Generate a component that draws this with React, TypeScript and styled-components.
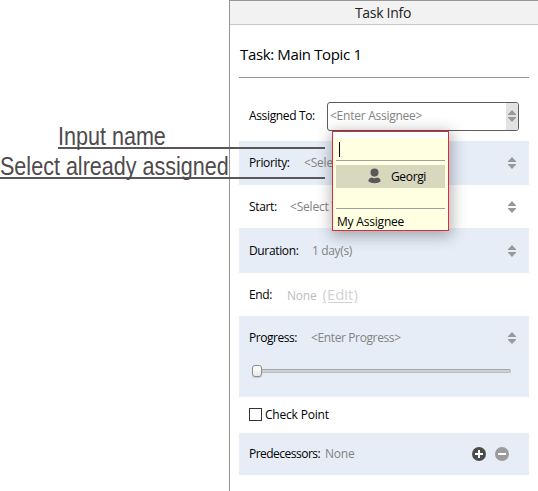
import React from "react";
import styled, { createGlobalStyle } from "styled-components";

const GlobalStyle = createGlobalStyle`
  * { box-sizing: border-box; }
  body { margin: 0; background: #fff; overflow: hidden; }
`;

const Page = styled.div`
  position: relative;
  width: 538px;
  height: 491px;
  padding-left: 229px;
  font-family: "Open Sans", "Noto Sans", sans-serif;
  font-size: 12px;
  line-height: 16px;
  color: #000;
`;

const Panel = styled.section`
  height: 491px;
  border-left: 1px solid #969696;
  border-top: 1px solid #969696;
`;

const Header = styled.header`
  height: 24px;
  padding: 0 2px 0 0;
  border-bottom: 1px solid #c9c9c9;
  background: #f2f2f2;
  color: #222;
  font-size: 14px;
  letter-spacing: -0.3px;
  line-height: 24px;
  text-align: center;
`;

const Body = styled.div`
  padding: 0 9px;
`;

const Title = styled.h1`
  height: 53px;
  margin: 0 0 13px;
  padding: 18px 0 0 1px;
  border-bottom: 1px solid #969696;
  font-size: 15px;
  font-weight: 400;
  letter-spacing: -0.36px;
  line-height: 22px;
`;

const Row = styled.div<{ $h: number; $tint?: boolean }>`
  display: flex;
  align-items: center;
  height: ${(p) => p.$h}px;
  padding: 0 10px;
  background: ${(p) => (p.$tint ? "#e6edf7" : "transparent")};
`;

const Tall = styled.div`
  height: 81px;
  background: #e6edf7;
`;

const Label = styled.span<{ $w?: number; $ls?: number }>`
  flex: none;
  width: ${(p) => (p.$w ? `${p.$w}px` : "auto")};
  letter-spacing: ${(p) => p.$ls ?? -0.35}px;
  white-space: nowrap;
`;

const Value = styled.span<{ $color?: string; $ls?: number }>`
  flex: 1;
  color: ${(p) => p.$color ?? "#838383"};
  letter-spacing: ${(p) => p.$ls ?? -0.2}px;
  white-space: nowrap;
`;

const Edit = styled.span`
  margin-left: 6px;
  font-size: 15px;
  letter-spacing: -0.05px;
  color: #d2d2d2;
  text-decoration: underline;
  text-underline-offset: 2px;
`;

const Field = styled.div`
  display: flex;
  width: 192px;
  height: 29px;
  margin-top: 1px;
  border: 1px solid #5c5c5c;
  border-radius: 3px;
  padding-left: 2px;
  align-items: center;
  overflow: hidden;
`;

const FieldText = styled(Value)`
  margin-top: -1px;
`;

const FieldButton = styled.span`
  display: flex;
  align-items: center;
  justify-content: center;
  width: 12px;
  height: 27px;
  padding-bottom: 1px;
  background: #e2e2e2;
`;

const SpinSlot = styled.span`
  display: flex;
  width: 8px;
  margin-right: 3px;
`;

const Track = styled.div`
  position: relative;
  height: 4px;
  margin: 9px 18px 0 13px;
  border: 1px solid #b8babd;
  border-top-color: #a5a7aa;
  border-radius: 2px;
  background: #cdd0d4;
`;

const Thumb = styled.span`
  position: absolute;
  left: -1px;
  top: -5px;
  width: 10px;
  height: 12px;
  border: 1px solid #8c8c8c;
  border-radius: 3px;
  background: linear-gradient(#fff, #e8e8e8);
  box-shadow: 0 1px 1px rgba(0, 0, 0, 0.15);
`;

const CheckBox = styled.span`
  width: 13px;
  height: 13px;
  margin: -1px 3px 0 0;
  border: 1px solid #333;
  background: #fff;
`;

const Actions = styled.span`
  display: flex;
  gap: 9px;
  margin-right: 10px;
`;

const Popup = styled.div`
  position: absolute;
  left: 332px;
  top: 131px;
  width: 117px;
  height: 100px;
  padding: 0 3px;
  border: 1px solid #e02a3c;
  background: linear-gradient(#fff 6px, #ffffe1 6px);
  box-shadow: 1px 3px 14px 2px rgba(0, 0, 0, 0.3);
`;

const NameInput = styled.div`
  height: 29px;
  padding: 10px 0 0 3px;
  border-bottom: 1px solid #a0a0a0;
`;

const Caret = styled.span`
  display: block;
  width: 1px;
  height: 15px;
  background: #000;
`;

const Person = styled.div`
  display: flex;
  align-items: center;
  height: 23px;
  margin-top: 4px;
  padding-left: 32px;
  gap: 10px;
  background: #d8d8bf;
`;

const PersonSvg = styled.svg`
  margin-top: -2px;
`;

const Mine = styled.div`
  height: 23px;
  margin-top: 20px;
  padding: 5px 0 0 1px;
  border-top: 1px solid #a0a0a0;
  white-space: nowrap;
`;

const Callout = styled.div<{ $x: number; $y: number }>`
  position: absolute;
  left: ${(p) => p.$x}px;
  top: ${(p) => p.$y}px;
  width: ${(p) => 325 - p.$x}px;
  height: 30px;
  border-bottom: 2px solid #5b5557;
  font: 25px/34px "Liberation Sans", Arial, sans-serif;
  color: #4f4a4c;
  white-space: nowrap;
`;

const CalloutText = styled.span<{ $sx: number }>`
  display: inline-block;
  transform: scaleX(${(p) => p.$sx});
  transform-origin: left;
`;

const Spin = () => (
  <svg width="8" height="12" viewBox="0 0 8 12" fill="#999">
    <path d="M4 0L8 4.2V5H0V4.2ZM0 7H8V7.8L4 12L0 7.8Z" />
  </svg>
);

const PersonIcon = () => (
  <PersonSvg width="13" height="16" viewBox="0 0 13 16" fill="#595959">
    <ellipse cx="6.5" cy="4.6" rx="4" ry="4.1" />
    <path d="M.4 13.6C.4 11.2 1.5 9.9 3.6 9.5Q6.5 11.1 9.4 9.5C11.5 9.9 12.6 11.2 12.6 13.6Q10.3 15.3 6.5 15.3T.4 13.6Z" />
  </PersonSvg>
);

const RoundIcon = ({ plus }: { plus?: boolean }) => (
  <svg width="14" height="14" viewBox="0 0 14 14">
    <circle cx="7" cy="7" r="7" fill={plus ? "#4b4b4b" : "#9c9c9c"} />
    <path d={plus ? "M3 7H11M7 3V11" : "M3 7H11"} stroke="#fff" strokeWidth="2" />
  </svg>
);

export default function App() {
  return (
    <Page>
      <GlobalStyle />
      <Panel>
        <Header>Task Info</Header>
        <Body>
          <Title>Task: Main Topic 1</Title>
          <Row $h={50}>
            <Label $w={78}>Assigned To:</Label>
            <Field>
              <FieldText $ls={-0.25}>&lt;Enter Assignee&gt;</FieldText>
              <FieldButton><Spin /></FieldButton>
            </Field>
          </Row>
          <Row $h={44} $tint>
            <Label $w={55}>Priority:</Label>
            <Value>&lt;Select Priority&gt;</Value>
            <SpinSlot><Spin /></SpinSlot>
          </Row>
          <Row $h={43}>
            <Label $w={41}>Start:</Label>
            <Value>&lt;Select Time&gt;</Value>
            <SpinSlot><Spin /></SpinSlot>
          </Row>
          <Row $h={45} $tint>
            <Label $w={63}>Duration:</Label>
            <Value $ls={-0.35}>1 day(s)</Value>
            <SpinSlot><Spin /></SpinSlot>
          </Row>
          <Row $h={43}>
            <Label $w={38}>End:</Label>
            <Value $color="#bcbcbc">None<Edit>(Edit)</Edit></Value>
          </Row>
          <Tall>
            <Row $h={44}>
              <Label $w={62} $ls={-0.45}>Progress:</Label>
              <Value $ls={-0.38}>&lt;Enter Progress&gt;</Value>
              <SpinSlot><Spin /></SpinSlot>
            </Row>
            <Track><Thumb /></Track>
          </Tall>
          <Row $h={36}>
            <CheckBox />
            <Label $ls={-0.2}>Check Point</Label>
          </Row>
          <Row $h={42} $tint>
            <Label $w={76} $ls={-0.52}>Predecessors:</Label>
            <Value>None</Value>
            <Actions><RoundIcon plus /><RoundIcon /></Actions>
          </Row>
        </Body>
      </Panel>
      <Popup>
        <NameInput><Caret /></NameInput>
        <Person><PersonIcon /><Label>Georgi</Label></Person>
        <Mine><Label $ls={-0.2}>My Assignee</Label></Mine>
      </Popup>
      <Callout $x={58} $y={119}><CalloutText $sx={0.862}>Input name</CalloutText></Callout>
      <Callout $x={0} $y={149}><CalloutText $sx={0.862}>Select already assigned</CalloutText></Callout>
    </Page>
  );
}
